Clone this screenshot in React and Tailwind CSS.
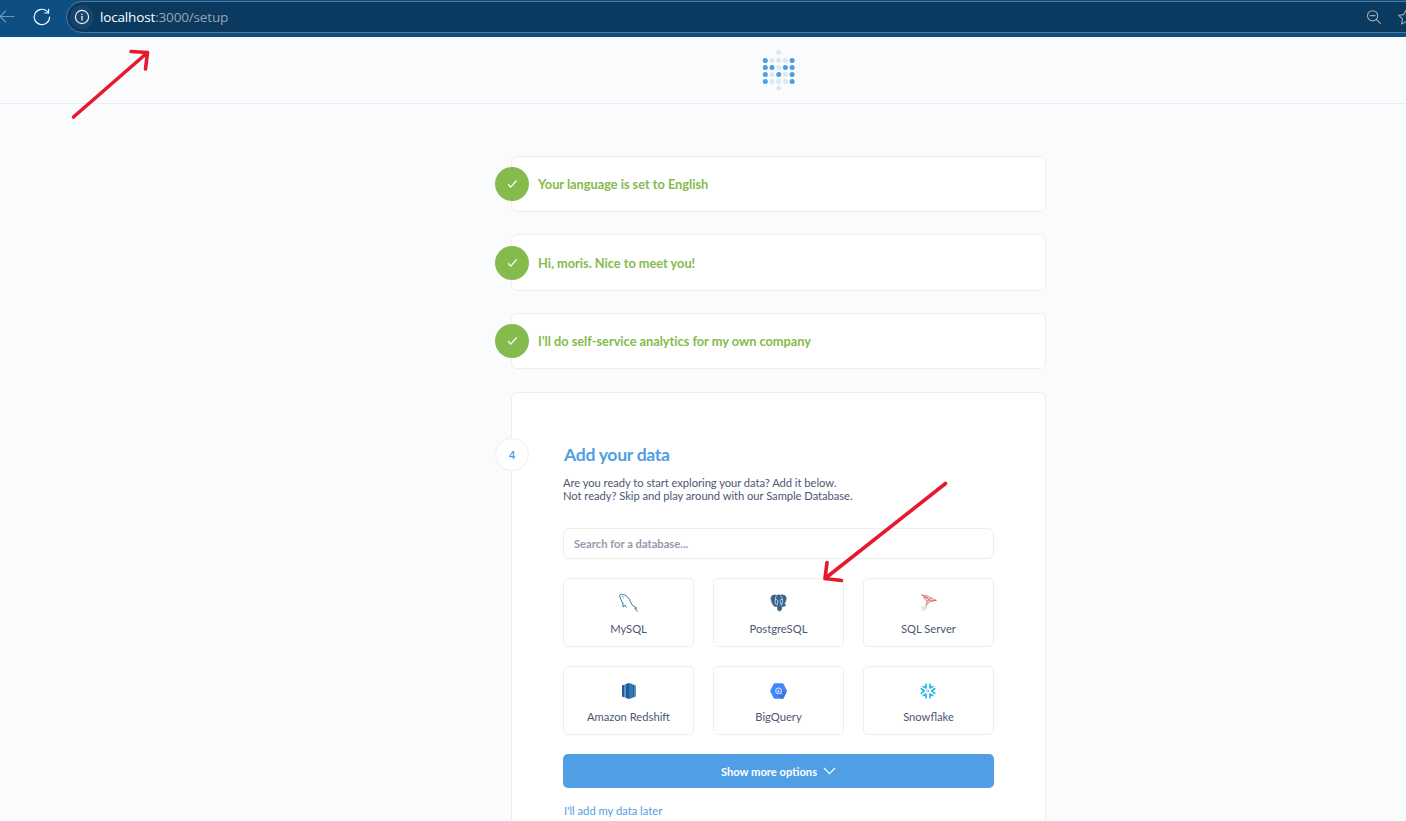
import React from "react";

const logoRows = ["#...#", "##.##", "#.#.#", "#...#"];

function Logo() {
  return (
    <svg className="h-[42px] w-[34px]" viewBox="762 49 34 42">
      <circle cx="778.8" cy="52.4" r="2.4" fill="#d9e8f6" />
      {logoRows.map((row, y) =>
        row.split("").map((c, x) => (
          <circle
            key={`${x}-${y}`}
            cx={765.3 + x * 6.7}
            cy={60.4 + y * 7}
            r="2.5"
            fill={c === "#" ? "#4d9ce4" : "#d9e8f6"}
          />
        ))
      )}
      <circle cx="778.8" cy="88.3" r="2.4" fill="#d9e8f6" />
    </svg>
  );
}

function BrowserBar() {
  return (
    <div className="flex h-[37px] w-full items-start overflow-hidden bg-[#0d4f82]">
      <svg className="h-[34px] w-[66px] shrink-0" viewBox="0 0 66 34" fill="none" strokeLinecap="round" strokeLinejoin="round">
        <path d="M14 16.5H0M5.5 11L0 16.5L5.5 22" stroke="#7295b2" strokeWidth="1.1" />
        <path d="M49.6 17A7.7 7.7 0 1 1 47.2 11.4L48.5 12.8" stroke="#f2f6fa" strokeWidth="1.2" />
        <path d="M48.6 9.3V13H44.6" stroke="#f2f6fa" strokeWidth="1.2" />
      </svg>
      <div className="mt-px flex h-8 w-[1400px] shrink-0 items-center rounded-l-full border border-[#54799a] bg-[#0a3a60]">
        <div className="ml-[3px] flex size-6 items-center justify-center rounded-full bg-[#16446a]">
          <svg className="size-4" viewBox="0 0 16 16" fill="none">
            <circle cx="8" cy="8" r="6.6" stroke="#e8eef4" strokeWidth="1.2" />
            <path d="M8 7.3V11" stroke="#e8eef4" strokeWidth="1.3" strokeLinecap="round" />
            <circle cx="8" cy="5.2" r=".8" fill="#e8eef4" />
          </svg>
        </div>
        <span className="ml-[6px] w-[1260px] shrink-0 font-['Open_Sans','Noto_Sans',sans-serif] text-[13.5px] leading-[18px] tracking-[-0.16px] text-[#9ba5ae]">
          <span className="text-white">localhost</span>:3000/setup
        </span>
        <svg className="h-5 w-[46px] shrink-0" viewBox="1360 7 46 20" fill="none" stroke="#a3a9ae" strokeWidth="1.1" strokeLinecap="round" strokeLinejoin="round">
          <circle cx="1372.6" cy="15.8" r="5.1" />
          <path d="M1370.2 15.6H1375M1376.4 19.5L1380.4 23.3" />
          <path d="M1406 10.2L1403.8 14.6L1398.8 15.3L1402.4 18.9L1401.6 24L1406 21.7" />
        </svg>
      </div>
    </div>
  );
}

function DoneStep({ children, className }) {
  return (
    <div className={`flex w-[535px] items-center rounded-[6px] border border-[#eeeef0] bg-white ${className}`}>
      <div className="-ml-[17px] flex size-[34px] shrink-0 items-center justify-center rounded-full bg-[#84bb4c]">
        <svg className="size-[10px]" viewBox="-.3 0 10 10" fill="none" stroke="#fff" strokeWidth="1.25">
          <path d="M.8 5.3L3.4 8.1L9.3 1.5" />
        </svg>
      </div>
      <span className="ml-[9px] text-[12.8px] font-bold leading-4 tracking-[-0.02px] text-[#84bb4c] [font-variant-ligatures:none]">{children}</span>
    </div>
  );
}

const MySql = () => (
  <svg className="size-5" viewBox="0 0 20 20" fill="none" stroke="#2b7f9e" strokeWidth="1" strokeLinecap="round" strokeLinejoin="round">
    <path d="M3.8 10.6C3 8.4 1 5.2.7 3.2C.5 1.5 2.2.9 3.7 1.7C5.4 1.3 8.5 3.2 10.2 6.2C11.6 8.7 12.4 11.5 14.3 13L17.7 15.1L15.9 15.6L18.5 18.3" />
    <path d="M3.8 10.6L4.2 14.1L5.8 12L7.3 14.2" />
    <path d="M3.5 3.6L4.1 4.3" />
  </svg>
);

const Postgres = () => (
  <svg className="size-5" viewBox="0.4 0 20 20" fill="none" strokeLinecap="round" strokeLinejoin="round">
    <path d="M3 3.2C4.5 1.6 7 2 8 2.5C9.5 1.7 11 1.9 12 2.3C14 1.5 17 2 17.5 4.5C17.8 7 16.3 9.5 15.6 11L17.3 12.1C16.5 13.2 14.5 13.5 13.2 13.3L12.8 16.6C12.3 18.3 9.6 18.6 9.2 16.8L8.8 13L6.5 13.5C4.5 13 2.5 8 2.4 5.5Z" fill="#336791" stroke="#4b5f6f" strokeWidth=".8" />
    <path d="M7.6 3.2C6.1 5.5 7 8 6.5 10.8L8.9 11.7L9.2 8.3C8.9 6.4 7.8 6.4 6.8 6.7M12.2 3C13.8 5 14.5 7 13.7 10L12.8 12.2M13.5 6.6C12 6 11.3 6.8 11.5 8.4L12.6 11.7" stroke="#dce7ef" strokeWidth=".75" />
  </svg>
);

const SqlServer = () => (
  <svg className="size-5" viewBox="1.4 0 20 20" fill="none" strokeLinecap="round" strokeLinejoin="round">
    <path d="M3 14.5C5 12.5 7.5 12 9.5 12.2L10.3 14.5C9.5 16.5 6.5 18.3 4.3 18.4Z" fill="#ececee" />
    <path d="M4.3 13.5L8.5 14.5L5 18M8.5 14.5L8 11" stroke="#d2d2d6" strokeWidth=".6" />
    <path d="M4.2 1.8L10 3.2L18.6 7.4L12.6 8.4L8.5 12.4L9.4 8.3L5.8 4L9.7 4.9Z" fill="#f7dcdd" stroke="#cf5a60" strokeWidth=".7" />
    <path d="M9.7 4.9L12 8L18.6 7.4M9.2 8.3L13.6 5.3" stroke="#cf5a60" strokeWidth=".7" />
  </svg>
);

const Redshift = () => (
  <svg className="size-5" viewBox="0 0 20 20">
    <path d="M3 4.6L5 3.7V16.3L3 15.4Z" fill="#205b99" />
    <path d="M5 3.7L6.8 3.3V16.7L5 16.3Z" fill="#5294cf" />
    <path d="M6.8 3L10 2V18L6.8 17Z" fill="#205b99" />
    <path d="M10 2L13.2 3V17L10 18Z" fill="#3673b3" />
    <path d="M13.2 3.3L15 3.7V16.3L13.2 16.7Z" fill="#205b99" />
    <path d="M15 3.7L17 4.6V15.4L15 16.3Z" fill="#5294cf" />
  </svg>
);

const BigQuery = () => (
  <svg className="size-5" viewBox="0.4 0 20 20" fill="none">
    <path d="M6.2 2.2H13.8Q14.6 2.2 15 2.9L18.2 9.2Q18.6 10 18.2 10.8L15 17.1Q14.6 17.8 13.8 17.8H6.2Q5.4 17.8 5 17.1L1.8 10.8Q1.4 10 1.8 9.2L5 2.9Q5.4 2.2 6.2 2.2Z" fill="#4386fa" />
    <path d="M12.7 7L17.5 12L15 17.1Q14.6 17.8 13.8 17.8H12.7L7.8 12.8Z" fill="#3975dc" />
    <circle cx="10" cy="9.9" r="3" fill="#4386fa" stroke="#fff" strokeWidth=".8" />
    <path d="M8.6 9.9V11M10 8.6V11.5M11.4 10.3V11M12.3 12.2L13.6 13.5" stroke="#fff" strokeWidth=".8" />
  </svg>
);

const Snowflake = () => (
  <svg className="size-5" viewBox="1 0 20 20" fill="none" stroke="#29b5e8" strokeWidth="1.7" strokeLinecap="round" strokeLinejoin="round">
    <path d="M8 3.3V6.9L5.3 5.4M12 3.3V6.9L14.7 5.4M8 16.7V13.1L5.3 14.6M12 16.7V13.1L14.7 14.6" />
    <path d="M3.3 7.7L6.2 9.8L3.3 12.3M16.7 7.7L13.8 9.8L16.7 12.3" />
    <path d="M10 8.9L11.1 10L10 11.1L8.9 10Z" strokeWidth=".8" />
  </svg>
);

const databases = [
  ["MySQL", MySql],
  ["PostgreSQL", Postgres],
  ["SQL Server", SqlServer],
  ["Amazon Redshift", Redshift],
  ["BigQuery", BigQuery],
  ["Snowflake", Snowflake],
];

function AddData() {
  return (
    <section className="mt-[23px] flex h-[460px] w-[535px] items-start rounded-t-[6px] border border-b-0 border-[#eeeef0] bg-white">
      <div className="-ml-[17px] mt-[45px] flex h-[33px] w-[34px] shrink-0 items-center justify-center rounded-full border border-[#eeeef0] bg-white pt-px text-[11.2px] font-bold text-[#509ee3]">
        4
      </div>
      <div className="ml-[34px] mt-[51px] w-[431px]">
        <h2 className="pl-px text-[17.6px] font-bold leading-[22px] tracking-[-0.3px] text-[#509ee3]">Add your data</h2>
        <p className="mt-[10px] text-[11.2px] leading-[13px] tracking-[-0.04px] text-[#4c5773]">
          Are you ready to start exploring your data? Add it below.
          <br />
          Not ready? Skip and play around with our Sample Database.
        </p>
        <input
          aria-label="Database"
          placeholder="Search for a database..."
          className="mt-[26px] block h-[31px] w-full rounded-[6px] border border-[#eeeef0] px-[10px] text-[11.2px] font-bold text-[#4c5773] placeholder:text-[#949aab]"
        />
        <div className="mt-[19px] grid grid-cols-3 gap-[19px]">
          {databases.map(([name, Icon]) => (
            <button key={name} className="flex h-[69px] flex-col items-center rounded-[5px] border border-[#eeeef0] pt-[14px] text-[11.2px] leading-[14px] text-[#4c5773]">
              <Icon />
              <span className="mt-[9px]">{name}</span>
            </button>
          ))}
        </div>
        <button className="mt-[19px] flex h-[34px] w-full items-center justify-center rounded-[5px] bg-[#509ee3] text-[11.2px] font-bold text-white">
          <span className="pt-[2px]">Show more options</span>
          <svg className="ml-[6px] h-[8px] w-[13px]" viewBox="0 0 13 8" fill="none" stroke="#fff" strokeWidth="1.2">
            <path d="M1 1L6.5 6.6L12 1" />
          </svg>
        </button>
        <a className="mt-4 block pl-px text-[11.2px] leading-[14px] text-[#509ee3]">I'll add my data later</a>
      </div>
    </section>
  );
}

export default function App() {
  return (
    <div className="relative h-[821px] w-[1406px] overflow-hidden bg-[#f9fbfd] font-[Lato,sans-serif]">
      <BrowserBar />
      <header className="flex h-[67px] justify-center border-b border-[#e9ebee] pl-[151px] pt-3">
        <Logo />
      </header>
      <main className="ml-[511px] flex flex-col pt-[52px]">
        <DoneStep className="h-14">Your language is set to English</DoneStep>
        <DoneStep className="mt-[22px] h-[57px]">Hi, moris. Nice to meet you!</DoneStep>
        <DoneStep className="mt-[22px] h-14">I’ll do self-service analytics for my own company</DoneStep>
        <AddData />
      </main>
      <svg className="pointer-events-none absolute inset-0 h-[821px] w-[1406px]" viewBox="0 0 1406 821" fill="none" stroke="#e6192e" strokeWidth="3.6" strokeLinecap="round" strokeLinejoin="round">
        <path d="M73.5 117L147.5 52.5M131 51.5L147.5 52.5L145.5 69" />
        <path d="M945.5 483.5L825 578.5M827 562.5L825 578.5L841.5 580.5" />
      </svg>
    </div>
  );
}
